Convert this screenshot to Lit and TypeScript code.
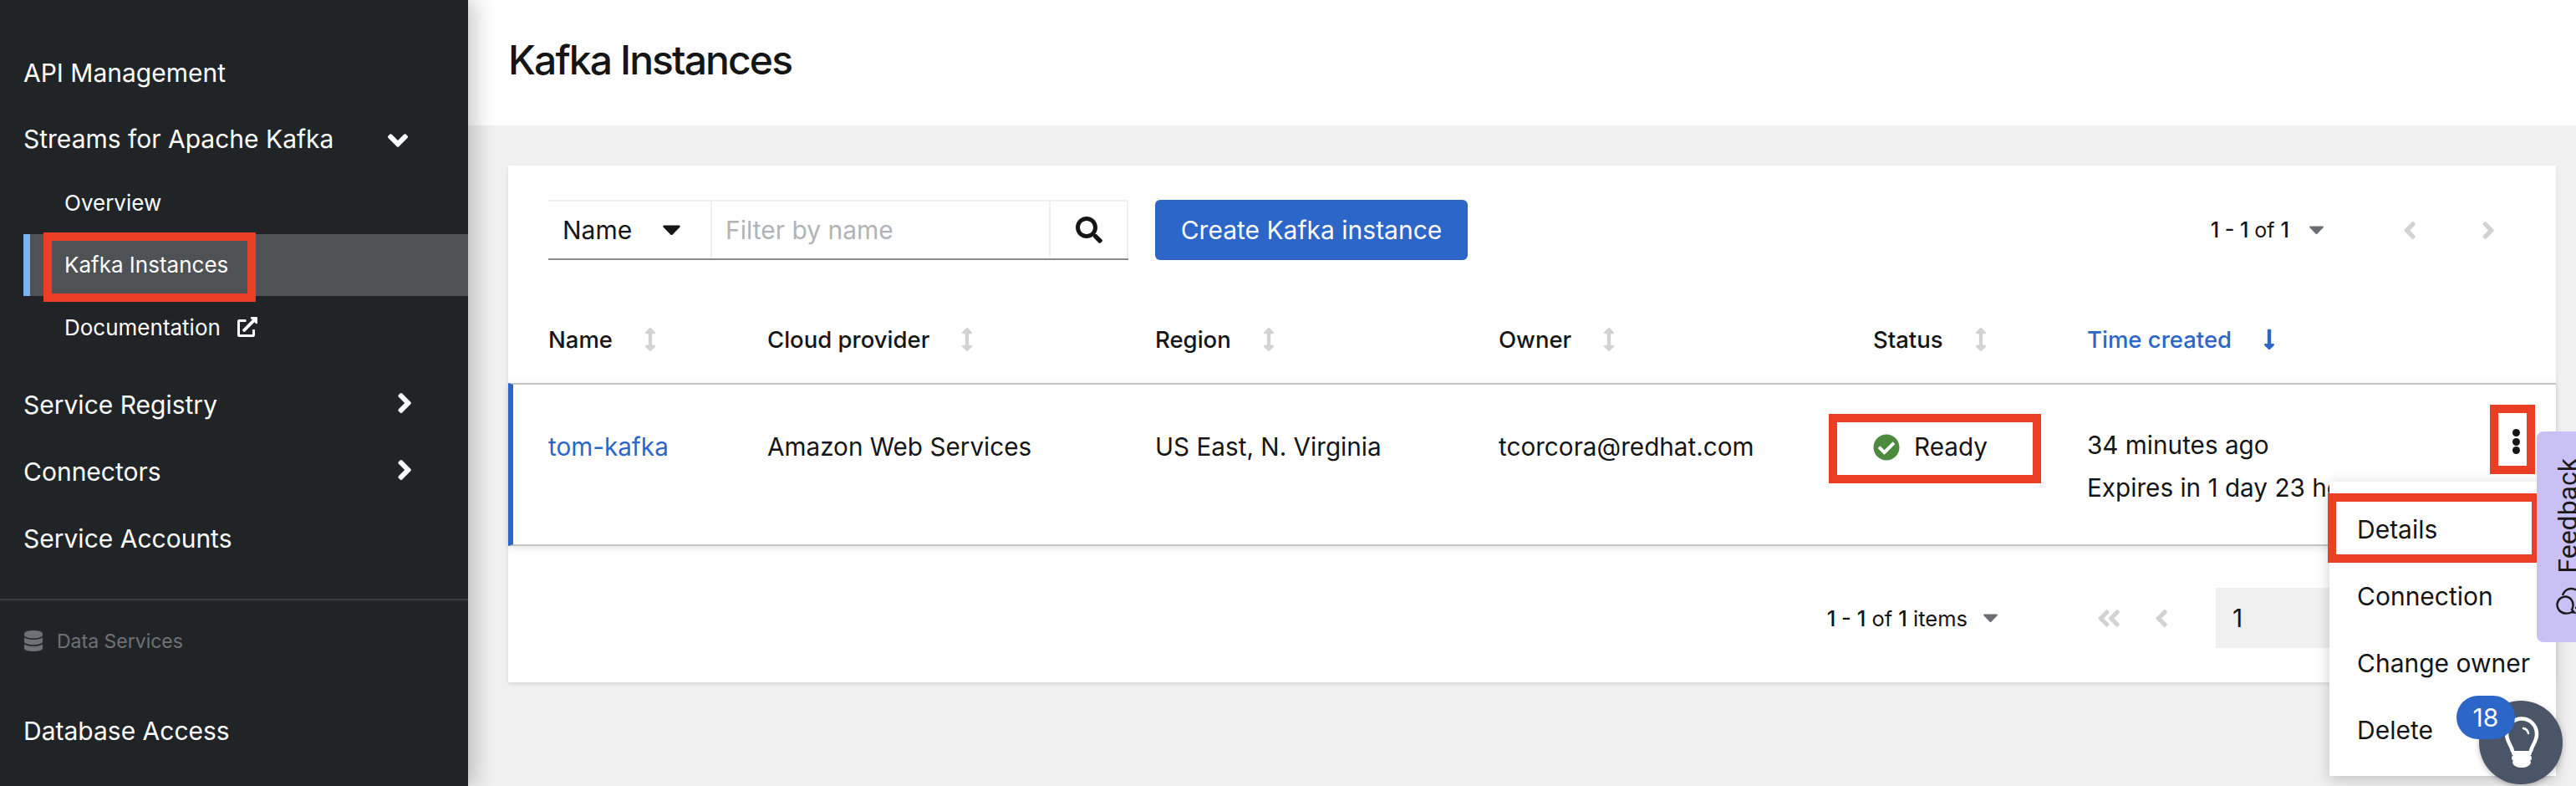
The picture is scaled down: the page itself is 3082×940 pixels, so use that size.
import { LitElement, html, css, svg } from 'lit';
import { customElement } from 'lit/decorators.js';

const ANGLE_DOWN = 'M143 352.3L7 216.3c-9.4-9.4-9.4-24.6 0-33.9l22.6-22.6c9.4-9.4 24.6-9.4 33.9 0l96.4 96.4 96.4-96.4c9.4-9.4 24.6-9.4 33.9 0l22.6 22.6c9.4 9.4 9.4 24.6 0 33.9l-136 136c-9.2 9.4-24.4 9.4-33.8 0z';
const ANGLE_RIGHT = 'M224.3 273l-136 136c-9.4 9.4-24.6 9.4-33.9 0l-22.6-22.6c-9.4-9.4-9.4-24.6 0-33.9l96.4-96.4-96.4-96.4c-9.4-9.4-9.4-24.6 0-33.9L54.3 103c9.4-9.4 24.6-9.4 33.9 0l136 136c9.5 9.4 9.5 24.6.1 34z';
const ANGLE_LEFT = 'M31.7 239l136-136c9.4-9.4 24.6-9.4 33.9 0l22.6 22.6c9.4 9.4 9.4 24.6 0 33.9L127.9 256l96.4 96.4c9.4 9.4 9.4 24.6 0 33.9L201.7 409c-9.4 9.4-24.6 9.4-33.9 0l-136-136c-9.5-9.4-9.5-24.6-.1-34z';
const ANGLE_DOUBLE_LEFT = 'M223.7 239l136-136c9.4-9.4 24.6-9.4 33.9 0l22.6 22.6c9.4 9.4 9.4 24.6 0 33.9L319.9 256l96.4 96.4c9.4 9.4 9.4 24.6 0 33.9L393.7 409c-9.4 9.4-24.6 9.4-33.9 0l-136-136c-9.5-9.4-9.5-24.6-.1-34zm-192 34l136 136c9.4 9.4 24.6 9.4 33.9 0l22.6-22.6c9.4-9.4 9.4-24.6 0-33.9L127.9 256l96.4-96.4c9.4-9.4 9.4-24.6 0-33.9L201.7 103c-9.4-9.4-24.6-9.4-33.9 0l-136 136c-9.5 9.4-9.5 24.6-.1 34z';
const SEARCH = 'M505 442.7L405.3 343c-4.5-4.5-10.6-7-17-7H372c27.6-35.3 44-79.7 44-128C416 93.1 322.9 0 208 0S0 93.1 0 208s93.1 208 208 208c48.3 0 92.7-16.4 128-44v16.3c0 6.4 2.5 12.5 7 17l99.7 99.7c9.4 9.4 24.6 9.4 33.9 0l28.3-28.3c9.4-9.4 9.4-24.6.1-34zM208 336c-70.7 0-128-57.2-128-128 0-70.7 57.2-128 128-128 70.7 0 128 57.2 128 128 0 70.7-57.2 128-128 128z';
const CHECK_CIRCLE = 'M504 256c0 136.967-111.033 248-248 248S8 392.967 8 256 119.033 8 256 8s248 111.033 248 248zM227.314 387.314l184-184c6.248-6.248 6.248-16.379 0-22.627l-22.627-22.627c-6.248-6.249-16.379-6.249-22.628 0L216 308.118l-70.059-70.059c-6.248-6.248-16.379-6.248-22.628 0l-22.627 22.627c-6.248 6.248-6.248 16.379 0 22.627l104 104c6.249 6.249 16.379 6.249 22.628.001z';
const DATABASE = 'M448 73.143v45.714C448 159.143 347.667 192 224 192S0 159.143 0 118.857V73.143C0 32.857 100.333 0 224 0s224 32.857 224 73.143zM448 176v102.857C448 319.143 347.667 352 224 352S0 319.143 0 278.857V176c48.125 33.143 136.208 48.572 224 48.572S399.874 209.143 448 176zm0 160v102.857C448 479.143 347.667 512 224 512S0 479.143 0 438.857V336c48.125 33.143 136.208 48.572 224 48.572S399.874 369.143 448 336z';
const EXTERNAL = 'M432,320H400a16,16,0,0,0-16,16V448H64V128H208a16,16,0,0,0,16-16V80a16,16,0,0,0-16-16H48A48,48,0,0,0,0,112V464a48,48,0,0,0,48,48H400a48,48,0,0,0,48-48V336A16,16,0,0,0,432,320ZM488,0h-128c-21.37,0-32.05,25.91-17,41l35.73,35.73L135,320.37a24,24,0,0,0,0,34L157.67,377a24,24,0,0,0,34,0L435.28,133.32,471,169c15,15,41,4.5,41-17V24A24,24,0,0,0,488,0Z';
const ARROWS_V = 'M214.059 377.941H168V134.059h46.059c21.382 0 32.09-25.851 16.971-40.971L144.971 7.029c-9.373-9.373-24.568-9.373-33.941 0L24.971 93.088c-15.119 15.119-4.411 40.971 16.971 40.971H88v243.882H41.941c-21.382 0-32.09 25.851-16.971 40.971l86.059 86.059c9.373 9.373 24.568 9.373 33.941 0l86.059-86.059c15.12-15.119 4.412-40.971-16.97-40.971z';
const ARROW_DOWN = 'M168 345.941V44c0-6.627-5.373-12-12-12h-56c-6.627 0-12 5.373-12 12v301.941H41.941c-21.382 0-32.09 25.851-16.971 40.971l86.059 86.059c9.373 9.373 24.569 9.373 33.941 0l86.059-86.059c15.119-15.119 4.411-40.971-16.971-40.971H168z';
const CARET = 'M31.3 192h257.3c17.8 0 26.7 21.5 14.1 34.1L174.1 354.8c-7.8 7.8-20.5 7.8-28.3 0L17.2 226.1C4.6 213.5 13.5 192 31.3 192z';

const icon = (d: string, box: string, w: number, h: number, cls = '') =>
  html`<svg class=${cls} viewBox=${box} width=${w} height=${h} fill="currentColor" aria-hidden="true">${svg`<path d=${d}></path>`}</svg>`;

const caret = (cls = '', w = 21, h = 12) => icon(CARET, '10 185 300 175', w, h, cls);
const sortIcon = () => icon(ARROWS_V, '0 0 256 512', 14, 28, 'sort');

@customElement('app-root')
export class AppRoot extends LitElement {
  static styles = css`
    :host {
      display: block;
      position: relative;
      width: 3082px;
      height: 940px;
      overflow: hidden;
      background: #f0f0f0;
      font-family: Inter, 'Liberation Sans', sans-serif;
      color: #151515;
    }

    svg { display: block; flex: none; }

    .shell { display: flex; height: 940px; }

    /* sidebar */
    .sidebar {
      flex: none;
      width: 560px;
      padding-top: 47px;
      box-sizing: border-box;
      background: #212427;
      color: #fff;
      box-shadow: 8px 0 24px rgba(0, 0, 0, 0.22);
      position: relative;
      z-index: 2;
    }
    .nav-item {
      display: flex;
      align-items: center;
      justify-content: space-between;
      height: 80px;
      padding: 0 68px 0 28px;
      font-size: 30px;
    }
    .nav-item.parent { height: 78px; }
    .nav-item svg { margin-top: -4px; }
    .nav-item.parent svg { margin: 4px 4px 0 0; }
    .sub-list { margin: 0 0 15px 28px; }
    .sub-item {
      position: relative;
      display: flex;
      align-items: center;
      gap: 20px;
      height: 74.5px;
      padding-left: 41px;
      border-left: 8px solid transparent;
      font-size: 26px;
    }
    .sub-item.current {
      background: #4f5255;
      border-left-color: #7bb3ee;
    }
    .nav-divider {
      height: 2px;
      margin-top: 32px;
      background: #3c3f42;
    }
    .nav-group {
      display: flex;
      align-items: center;
      gap: 17px;
      height: 98px;
      padding-left: 29px;
      font-size: 23px;
      color: #6e7276;
    }
    .nav-item.last { margin-top: 18px; }

    /* annotation boxes */
    .callout {
      position: absolute;
      box-sizing: border-box;
      border: 10px solid #ea3f24;
      z-index: 5;
    }
    .sub-item .callout { left: 16px; top: -2px; width: 254px; height: 83px; }
    .status .callout { left: -53px; top: -15px; width: 254px; height: 83px; }
    .kebab .callout { left: 17px; top: -26px; width: 54px; height: 83px; }
    .menu-item .callout { left: -2px; top: -3px; width: 254px; height: 83px; }

    /* main */
    .main { flex: 1; min-width: 0; }
    .page-head {
      display: flex;
      align-items: center;
      height: 150px;
      padding: 0 0 8px 48px;
      box-sizing: border-box;
      background: #fff;
    }
    h1 { margin: 0; font-size: 48px; font-weight: 500; letter-spacing: -1.9px; }
    .content { padding: 48px 24px 0 48px; }
    .card {
      height: 618px;
      background: #fff;
      box-shadow: 0 2px 4px rgba(0, 0, 0, 0.1);
    }

    .toolbar {
      display: flex;
      align-items: center;
      height: 72px;
      padding: 41px 74px 0 48px;
      font-size: 30px;
    }
    .filter {
      display: flex;
      width: 694px;
      height: 72px;
      box-sizing: border-box;
      border-top: 2px solid #f0f0f0;
      border-bottom: 2px solid #8a8d90;
    }
    .filter-select {
      display: flex;
      align-items: center;
      justify-content: space-between;
      width: 196px;
      box-sizing: border-box;
      padding: 0 36px 0 17px;
      border-right: 2px solid #f0f0f0;
    }
    .filter-input {
      display: flex;
      align-items: center;
      flex: 1;
      padding-left: 16px;
      color: #b1b4b7;
    }
    .filter-btn {
      display: flex;
      align-items: center;
      justify-content: center;
      width: 95px;
      border-left: 2px solid #f0f0f0;
      border-right: 2px solid #f0f0f0;
      box-sizing: border-box;
    }
    .primary {
      display: flex;
      align-items: center;
      justify-content: center;
      height: 72px;
      width: 374px;
      margin-left: 32px;
      border: 0;
      border-radius: 6px;
      background: #2b66c8;
      color: #fff;
      font: inherit;
    }
    .pager-top {
      display: flex;
      align-items: center;
      margin-left: auto;
      color: #151515;
    }
    .pager-top .count { font-size: 25px; }
    .pager-top .count b { font-weight: 500; }
    .pager-top .caret { margin-left: 24px; color: #6a6e73; }
    .pager-top .prev { margin-left: 96px; color: #d2d2d2; }
    .pager-top .next { margin-left: 80px; color: #d2d2d2; }

    .cols {
      display: grid;
      grid-template-columns: 262px 464px 411px 448px 256px 1fr 96px;
    }
    .head-row {
      height: 104px;
      margin-top: 43px;
      padding-left: 48px;
      align-items: center;
      font-size: 27.5px;
      font-weight: 500;
    }
    .th { display: flex; align-items: center; gap: 38px; }
    .sort { color: #d2d2d2; }
    .th.active { color: #2b66c8; }
    .th.active .sort { color: #2b66c8; }

    .data-row {
      position: relative;
      height: 195px;
      box-sizing: border-box;
      padding: 50px 0 0 42px;
      border-top: 2px solid #c4c4c4;
      border-bottom: 2px solid #c4c4c4;
      border-left: 6px solid #2b66c8;
      box-shadow: 0 2px 8px rgba(0, 0, 0, 0.1);
      font-size: 29.7px;
      line-height: 49px;
    }
    .data-row a { color: #2b66c8; text-decoration: none; }
    .status { position: relative; display: flex; align-items: center; gap: 17px; height: 49px; }
    .status svg { color: #4c8a3d; }
    .time { white-space: nowrap; margin-top: -3px; line-height: 51px; }
    .kebab { position: relative; height: 49px; display: flex; justify-content: center; }
    .dots { display: flex; flex-direction: column; gap: 1.5px; margin-top: -4px; padding-top: 7px; }
    .dots i { display: block; width: 9px; height: 9px; border-radius: 50%; background: #151515; }

    .menu {
      position: absolute;
      top: 116px;
      right: 0;
      z-index: 3;
      width: 271px;
      height: 352px;
      box-sizing: border-box;
      padding-top: 17px;
      background: #fff;
      box-shadow: 0 4px 16px rgba(0, 0, 0, 0.2);
      font-size: 30px;
      line-height: normal;
    }
    .menu-item {
      position: relative;
      display: flex;
      align-items: center;
      height: 80px;
      padding-left: 33px;
    }

    .pager-bottom {
      display: flex;
      align-items: center;
      justify-content: flex-end;
      height: 72px;
      padding: 50px 48px 0 0;
      font-size: 25.5px;
    }
    .pager-bottom b { font-weight: 500; }
    .pager-bottom .caret { margin-left: 19px; color: #6a6e73; }
    .pager-bottom .first { margin-left: 120px; color: #d2d2d2; }
    .pager-bottom .prev { margin-left: 43px; color: #d2d2d2; }
    .page-input {
      display: flex;
      align-items: center;
      width: 359px;
      height: 72px;
      margin-left: 58px;
      padding-left: 20px;
      box-sizing: border-box;
      background: #f0f0f0;
      font-size: 30px;
    }

    /* floating widgets */
    .feedback {
      position: absolute;
      top: 516px;
      left: 3035px;
      width: 60px;
      height: 252px;
      box-sizing: border-box;
      padding-bottom: 32px;
      display: flex;
      flex-direction: column-reverse;
      gap: 14px;
      border-radius: 8px 0 0 8px;
      background: #c9c0f5;
      color: #1a1a1a;
      z-index: 4;
    }
    .feedback svg { margin-left: 22px; }
    .feedback span {
      writing-mode: vertical-rl;
      transform: rotate(180deg);
      margin-left: 21px;
      font-family: Roboto, sans-serif;
      font-size: 32px;
      line-height: 32px;
    }
    .beacon {
      position: absolute;
      left: 2966px;
      top: 838px;
      width: 100px;
      height: 100px;
      border-radius: 50%;
      background: #4a5567;
      box-shadow: 0 2px 6px rgba(0, 0, 0, 0.25);
      z-index: 6;
    }
    .badge {
      position: absolute;
      left: 2939px;
      top: 832px;
      display: flex;
      align-items: center;
      justify-content: center;
      width: 70px;
      height: 52px;
      border-radius: 26px;
      background: #2b66c8;
      color: #fff;
      font-size: 30px;
      z-index: 7;
    }
  `;

  render() {
    return html`
      <div class="shell">
        <aside class="sidebar">
          <div class="nav-item"><span>API Management</span></div>
          <div class="nav-item parent">
            <span>Streams for Apache Kafka</span>
            ${icon(ANGLE_DOWN, '0 150 320 212', 24, 16)}
          </div>
          <div class="sub-list">
            <div class="sub-item">Overview</div>
            <div class="sub-item current">
              Kafka Instances
              <div class="callout"></div>
            </div>
            <div class="sub-item">Documentation ${icon(EXTERNAL, '0 0 512 512', 24, 24)}</div>
          </div>
          <div class="nav-item"><span>Service Registry</span>${icon(ANGLE_RIGHT, '20 95 212 322', 16, 24)}</div>
          <div class="nav-item"><span>Connectors</span>${icon(ANGLE_RIGHT, '20 95 212 322', 16, 24)}</div>
          <div class="nav-item"><span>Service Accounts</span></div>
          <div class="nav-divider"></div>
          <div class="nav-group">${icon(DATABASE, '0 0 448 512', 22, 25)}<span>Data Services</span></div>
          <div class="nav-item last"><span>Database Access</span></div>
        </aside>

        <main class="main">
          <header class="page-head"><h1>Kafka Instances</h1></header>
          <div class="content">
            <section class="card">
              <div class="toolbar">
                <div class="filter">
                  <div class="filter-select"><span>Name</span>${caret()}</div>
                  <div class="filter-input">Filter by name</div>
                  <div class="filter-btn">${icon(SEARCH, '0 0 512 512', 32, 32)}</div>
                </div>
                <button class="primary">Create Kafka instance</button>
                <div class="pager-top">
                  <span class="count"><b>1 - 1</b> of <b>1</b></span>
                  ${caret('caret', 17, 10)}
                  ${icon(ANGLE_LEFT, '20 95 212 322', 14, 21, 'prev')}
                  ${icon(ANGLE_RIGHT, '20 95 212 322', 14, 21, 'next')}
                </div>
              </div>

              <div class="cols head-row">
                <div class="th">Name ${sortIcon()}</div>
                <div class="th">Cloud provider ${sortIcon()}</div>
                <div class="th">Region ${sortIcon()}</div>
                <div class="th">Owner ${sortIcon()}</div>
                <div class="th">Status ${sortIcon()}</div>
                <div class="th active">Time created ${icon(ARROW_DOWN, '0 0 256 512', 14, 28, 'sort')}</div>
              </div>

              <div class="cols data-row">
                <div><a href="#">tom-kafka</a></div>
                <div>Amazon Web Services</div>
                <div>US East, N. Virginia</div>
                <div>tcorcora@redhat.com</div>
                <div class="status">
                  ${icon(CHECK_CIRCLE, '0 0 512 512', 32, 32)}<span>Ready</span>
                  <div class="callout"></div>
                </div>
                <div class="time">34 minutes ago<br />Expires in 1 day 23 hours</div>
                <div class="kebab">
                  <div class="dots"><i></i><i></i><i></i></div>
                  <div class="callout"></div>
                </div>
                <div class="menu">
                  <div class="menu-item">Details<div class="callout"></div></div>
                  <div class="menu-item">Connection</div>
                  <div class="menu-item">Change owner</div>
                  <div class="menu-item">Delete</div>
                </div>
              </div>

              <div class="pager-bottom">
                <span><b>1 - 1</b> of <b>1</b> items</span>
                ${caret('caret', 17, 10)}
                ${icon(ANGLE_DOUBLE_LEFT, '20 95 404 322', 26, 21, 'first')}
                ${icon(ANGLE_LEFT, '20 95 212 322', 14, 21, 'prev')}
                <div class="page-input">1</div>
              </div>
            </section>
          </div>
        </main>
      </div>

      <div class="feedback">
        <svg viewBox="0 0 30 36" width="30" height="36" fill="none" stroke="currentColor" stroke-width="2.4">
          <path d="M20 32c-2 1-5 2-8 1.500C6 33 2 28 2.500 22.500 3 17 8 13 13 13.500c5 .5 9 5 8.500 11-.2 2-.5 3-1.500 4.500l3 3.500z"></path>
          <path d="M9 12c1-5 6-8.500 11-8 3 .3 6 1.500 8 4M24 27c2 0 4-1 6-2"></path>
        </svg>
        <span>Feedback</span>
      </div>

      <div class="beacon">
        <svg viewBox="0 0 100 100" width="100" height="100" fill="none" stroke="#fff">
          <path stroke-width="4.500" stroke-linecap="round" d="M40 60C38 52 33 49 33 39.500A18 18 0 1 1 69 39.500C69 49 64 52 62 60"></path>
          <path stroke-width="2.500" stroke-linecap="round" d="M53 33Q58 34 59 39"></path>
          <path fill="#fff" stroke="none" d="M41 60H61Q63 60 63 62.500Q63 65 61 65.500Q63 66 63 68.500Q63 71 61 71.500Q62 72.500 62 74C61 78 56 80 51 80C46 80 41 78 40 74Q40 72.500 41 71.500Q39 71 39 68.500Q39 66 41 65.500Q39 65 39 62.500Q39 60 41 60Z"></path>
        </svg>
      </div>
      <div class="badge">18</div>
    `;
  }
}
